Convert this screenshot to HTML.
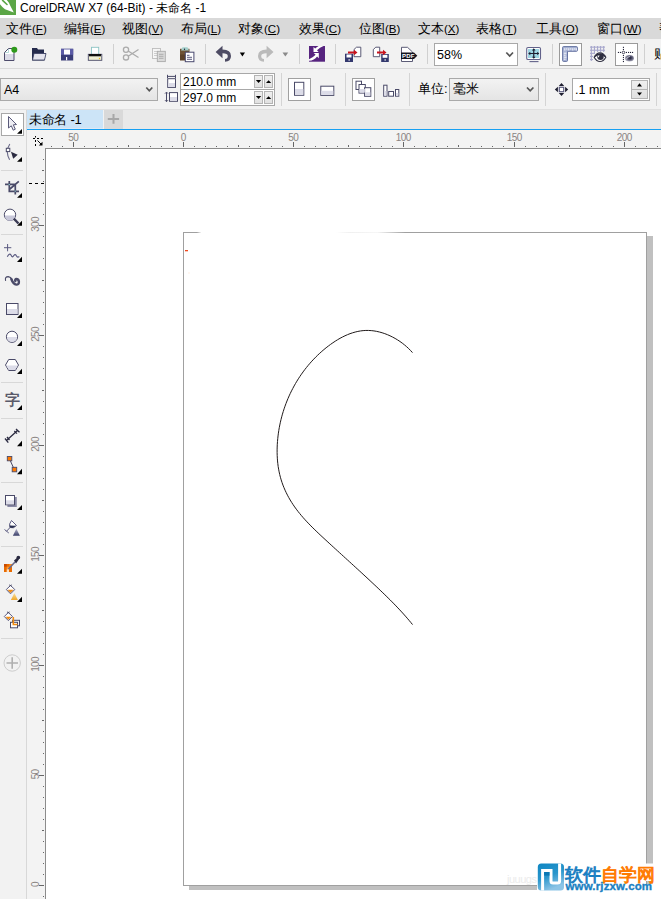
<!DOCTYPE html>
<html><head><meta charset="utf-8">
<style>
*{margin:0;padding:0;box-sizing:border-box}
html,body{width:661px;height:899px;overflow:hidden;background:#fff;font-family:"Liberation Sans",sans-serif;color:#000}
.a{position:absolute}
.t{position:absolute;white-space:nowrap}
.mi{position:absolute;top:20px;font-size:13px;line-height:18px;white-space:nowrap}
.mi span{font-size:11.5px}
.sv{position:absolute;left:0;top:0}
</style></head><body>
<!-- backgrounds -->
<div class="a" style="left:0;top:0;width:661px;height:18px;background:#fff"></div>
<div class="a" style="left:0;top:18px;width:661px;height:21px;background:#d9d9d9"></div>
<div class="a" style="left:0;top:39px;width:661px;height:70px;background:#f2f2f2"></div>
<div class="a" style="left:0;top:68px;width:661px;height:1px;background:#dadada"></div>
<div class="a" style="left:0;top:109px;width:661px;height:1px;background:#e0e0e0"></div>
<div class="a" style="left:0;top:110px;width:661px;height:789px;background:#f2f2f2"></div>
<div class="a" style="left:27px;top:110px;width:634px;height:19px;background:#e9e9e9"></div>
<div class="a" style="left:27px;top:110px;width:76px;height:18px;background:#cce4f7"></div><div class="a" style="left:27px;top:128px;width:76px;height:1px;background:#dfe9f5"></div>
<div class="a" style="left:104px;top:110px;width:19px;height:19px;background:#d9d9d9"></div><div class="a" style="left:103px;top:110px;width:1px;height:19px;background:#f2f2f2"></div>
<div class="a" style="left:27px;top:129px;width:634px;height:1px;background:#17a0f2"></div>
<div class="a" style="left:27px;top:130px;width:634px;height:1px;background:#f7f3ef"></div>
<div class="a" style="left:26px;top:110px;width:1px;height:789px;background:#d8d8d8"></div>
<!-- rulerbg -->
<div class="a" style="left:27px;top:131px;width:634px;height:17px;background:#f3f3f3"></div>
<div class="a" style="left:27px;top:148px;width:18px;height:751px;background:#f3f3f3"></div>
<div class="a" style="left:45px;top:148px;width:616px;height:1px;background:#8c8c8c"></div>
<div class="a" style="left:45px;top:148px;width:1px;height:751px;background:#8c8c8c"></div>
<div class="a" style="left:46px;top:149px;width:615px;height:750px;background:#fff"></div>

<!-- title -->
<svg class="a" style="left:0;top:0" width="16" height="15" viewBox="0 0 16 15"><rect width="16" height="15" fill="#5ba646"/><path d="M0 0 L6.8 0 Q9.3 2.8 10.3 5.8 L13.8 12.6 L5 9.2 Q2.3 7.3 0 4.2 Z" fill="#fff"/><path d="M2.6 0.3 L7 4.5" stroke="#5ba646" stroke-width="1.6" stroke-linecap="round"/></svg>

<div class="t" style="left:20px;top:1px;font-size:12px;line-height:15px">CorelDRAW X7 (64-Bit) - 未命名 -1</div>

<!-- menu -->
<div class="mi" style="left:6px">文件<span>(<u>F</u>)</span></div>
<div class="mi" style="left:64px">编辑<span>(<u>E</u>)</span></div>
<div class="mi" style="left:122px">视图<span>(<u>V</u>)</span></div>
<div class="mi" style="left:181px">布局<span>(<u>L</u>)</span></div>
<div class="mi" style="left:238px">对象<span>(<u>C</u>)</span></div>
<div class="mi" style="left:299px">效果<span>(<u>C</u>)</span></div>
<div class="mi" style="left:359px">位图<span>(<u>B</u>)</span></div>
<div class="mi" style="left:418px">文本<span>(<u>X</u>)</span></div>
<div class="mi" style="left:476px">表格<span>(<u>T</u>)</span></div>
<div class="mi" style="left:536px">工具<span>(<u>O</u>)</span></div>
<div class="mi" style="left:597px">窗口<span>(<u>W</u>)</span></div>
<div class="mi" style="left:659px">帮</div>


<!-- toolbar1 icons -->
<svg class="sv" width="661" height="110" viewBox="0 0 661 110" style="shape-rendering:geometricPrecision">
<g fill="#d0d0d0">
<rect x="113" y="44" width="1" height="20"/><rect x="205" y="44" width="1" height="20"/>
<rect x="299" y="44" width="1" height="20"/><rect x="335" y="44" width="1" height="20"/>
<rect x="427" y="44" width="1" height="20"/><rect x="552" y="44" width="1" height="20"/>
<rect x="644" y="44" width="1" height="20"/>
</g>
<!-- new -->
<path d="M4.5 52.5 L8.5 48.5 L14 48.5 L14 60.5 L4.5 60.5 Z" fill="#fff"/>
<rect x="4.5" y="54" width="9.5" height="6.5" fill="#dcdce8"/>
<path d="M4.5 52.5 L8.5 48.5 L14 48.5 L14 60.5 L4.5 60.5 Z" fill="none" stroke="#4d4b6b" stroke-width="1"/>
<path d="M5 52.5 L8.5 52.5 L8.5 49" fill="none" stroke="#9cc" stroke-width="0.7"/>
<circle cx="14.3" cy="49.8" r="3" fill="#2f9a1c"/>
<!-- open -->
<path d="M32 48 L37 48 L38 49.5 L44 49.5 L44 53 L46 53 L44.5 60.5 L32 60.5 Z" fill="#252b4d"/>
<path d="M34 53.5 L46 53.5 L44.5 60 L32.5 60 Z" fill="#e4e4ee" stroke="#3a3f62" stroke-width="0.8"/>
<!-- save -->
<rect x="61" y="48.8" width="12.2" height="11.7" fill="#3a3d78"/>
<rect x="61" y="48.8" width="12.2" height="6" fill="#5b5ba6"/>
<rect x="64" y="49.5" width="6" height="5" fill="#fff"/>
<rect x="66" y="57" width="1.2" height="3.3" fill="#fff"/>
<!-- print -->
<rect x="91.5" y="47.3" width="7.2" height="7.5" fill="#fff" stroke="#8cc4c4" stroke-width="0.9"/>
<rect x="88.3" y="54.3" width="13.5" height="6" fill="#efefd4" stroke="#4a4a68" stroke-width="0.9"/>
<rect x="89" y="54" width="12" height="2.3" fill="#111"/>
<circle cx="99.5" cy="58.5" r="0.7" fill="#e8c020"/>
<!-- scissors -->
<g fill="none" stroke="#ababab" stroke-width="1.3">
<circle cx="126" cy="49.8" r="2.6"/><circle cx="126" cy="57.4" r="2.6"/>
<path d="M128.2 51 L138.5 57.5 M128.2 56.2 L138.5 49.5"/>
</g>
<!-- copy -->
<rect x="152.5" y="48.5" width="8" height="10" fill="#f6f6f6" stroke="#bdbdbd" stroke-width="0.9"/>
<g stroke="#c4c4c4" stroke-width="0.8"><path d="M154 51.5h5M154 53.5h5M154 55.5h5"/></g>
<rect x="157.3" y="51.3" width="8" height="10.3" fill="#dadada" stroke="#ababab" stroke-width="0.9"/>
<g stroke="#a0a0a0" stroke-width="0.8"><path d="M159 54.3h4.5M159 56.3h4.5M159 58.3h4.5"/></g>
<!-- paste -->
<rect x="180" y="48.8" width="9.5" height="11.5" fill="#6e5334"/>
<rect x="180" y="54.5" width="9.5" height="5.8" fill="#5a4128"/>
<path d="M181 50.5 L182.5 47.3 L187.5 47.3 L189 50.5 Z" fill="#a5d0cc"/>
<circle cx="184.5" cy="49.3" r="0.7" fill="#223"/>
<rect x="185.3" y="52.2" width="8.6" height="9.5" fill="#fff" stroke="#4a4a70" stroke-width="1"/>
<g stroke="#4a4a70" stroke-width="0.9"><path d="M187 55.3h2.5M187 57.3h5M187 59.3h5"/></g>
<!-- undo -->
<path d="M215.6 52 L222.5 45.8 L222.5 49.5 Q231 49.5 231 56 Q231 61.7 225 61.7 L225 59 Q227.8 59 227.8 56 Q227.8 53.3 222.5 53.3 L222.5 58.3 Z" fill="#4e4c64"/>
<path d="M239.8 52.6 L245 52.6 L242.4 56.4 Z" fill="#000"/>
<!-- redo -->
<path d="M273.5 52 L266.6 45.8 L266.6 49.5 Q258 49.5 258 56 Q258 61.7 264 61.7 L264 59 Q261.2 59 261.2 56 Q261.2 53.3 266.6 53.3 L266.6 58.3 Z" fill="#bababa"/>
<path d="M282.5 52.6 L288.2 52.6 L285.35 56.4 Z" fill="#8a8a8a"/>
<!-- purple -->
<rect x="309" y="46" width="16" height="15.7" fill="#56237f"/>
<path d="M313.5 47 L313.5 52 L318.7 52 L317 50.2 Q319.8 47.3 323.5 46 L318.6 46 Q316.5 47.3 315.2 48.6 Z" fill="#fff"/>
<path d="M318.8 58.2 L318.8 53 L313.8 53 L315.6 54.8 Q313 57.6 309 59.2 L309 60.8 Q314.3 60.4 317.1 56.5 Z" fill="#fff"/>
<!-- import -->
<path d="M354 49.5 L356.5 47.2 L360.8 47.2 L360.8 56.7 L354 56.7 Z" fill="#fff" stroke="#4a4a68" stroke-width="0.9"/>
<rect x="345" y="53.7" width="8" height="8.3" fill="#33386e"/>
<rect x="346.5" y="54.5" width="5" height="3" fill="#fff"/>
<rect x="348.5" y="59.3" width="1.3" height="1.3" fill="#fff"/>
<path d="M348 51.5 L354 51.5 L354 49.8 L357.5 52.5 L354 55.2 L354 53.5 L348 53.5 Z" fill="#c8141e"/>
<!-- export -->
<path d="M373.3 49.5 L375.8 47.2 L379.7 47.2 L379.7 56.7 L373.3 56.7 Z" fill="#fff" stroke="#4a4a68" stroke-width="0.9"/>
<rect x="381.2" y="54" width="7.6" height="8" fill="#33386e"/>
<rect x="382.6" y="54.8" width="4.8" height="3" fill="#fff"/>
<rect x="384.5" y="59.3" width="1.3" height="1.3" fill="#fff"/>
<path d="M377 51.5 L383 51.5 L383 49.8 L386.5 52.5 L383 55.2 L383 53.5 L377 53.5 Z" fill="#c8141e"/>
<!-- pdf -->
<path d="M401.5 47.3 L407.5 47.3 L412.5 52 L412.5 61.5 L401.5 61.5 Z" fill="#fff" stroke="#4a4a68" stroke-width="0.9"/>
<path d="M401 52.5 L414 52.5 L417.3 55.8 L414 59 L401 59 Z" fill="#141420"/>
<text x="402" y="58.3" font-family="Liberation Sans" font-weight="bold" font-size="6" fill="#fff" letter-spacing="0.2">PDF</text>
<!-- zoom combo -->
<rect x="434.5" y="43.5" width="83" height="22" fill="#fff" stroke="#a8a8a8" stroke-width="1"/>
<path d="M506.3 52.5 L509.7 56 L513 52.5" fill="none" stroke="#555" stroke-width="1.7"/>
<!-- zoom icon -->
<rect x="526.7" y="47.5" width="13.8" height="12" rx="1.3" fill="#fff" stroke="#62628a" stroke-width="1.1"/>
<rect x="528" y="49" width="11.2" height="9" fill="#9fd6e4"/>
<path d="M529.5 61.6h9" stroke="#62628a" stroke-width="1.1"/>
<path d="M529 53.5h9.5M533.75 49v9" stroke="#1e1e30" stroke-width="1.2"/>
<path d="M528.2 53.5 L530.3 51.7 L530.3 55.3 Z M539.3 53.5 L537.2 51.7 L537.2 55.3 Z M533.75 48.3 L531.9 50.4 L535.6 50.4 Z M533.75 58.8 L531.9 56.7 L535.6 56.7 Z" fill="#1e1e30"/>
<!-- rulers toggle -->
<rect x="559.5" y="43.5" width="22" height="22" fill="#fff" stroke="#9a9a9a" stroke-width="1"/>
<path d="M563.5 46.6 L576.5 46.6 Q577.4 46.6 577.4 47.6 L577.4 50.4 Q577.4 51.3 576.5 51.3 L567.5 51.3 L567.5 60.6 Q567.5 61.4 566.6 61.4 L563.5 61.4 Q562.6 61.4 562.6 60.6 L562.6 47.6 Q562.6 46.6 563.5 46.6 Z" fill="#a9b4d6" stroke="#6674a2" stroke-width="1"/>
<g stroke="#fff" stroke-width="0.9">
<path d="M564.8 48.2v2.3M566.8 48.2v1.5M568.8 48.2v2.3M570.8 48.2v1.5M572.8 48.2v2.3M574.8 48.2v1.5M576.3 48.2v2.3"/>
<path d="M563.8 53.2h2.6M563.8 55.2h1.8M563.8 57.2h2.6M563.8 59.2h1.8"/>
</g>
<!-- grid eye -->
<g fill="#a9a9cd">
<rect x="590.8" y="46" width="1.1" height="15"/><rect x="593.9" y="46" width="1.1" height="8"/>
<rect x="597" y="46" width="1.1" height="6"/><rect x="600" y="46" width="1.1" height="6"/><rect x="603.1" y="46" width="1.1" height="6"/>
<rect x="590" y="46.6" width="15" height="1.1"/><rect x="590" y="49.7" width="15" height="1.1"/>
<rect x="590" y="52.8" width="5" height="1.1"/><rect x="590" y="55.9" width="3" height="1.1"/><rect x="590" y="59" width="3" height="1.1"/>
</g>
<path d="M594.2 57.3 Q596.5 52.8 600 52.8 Q603.5 52.8 605.8 57.3 Q603.5 61.5 600 61.5 Q596.5 61.5 594.2 57.3 Z" fill="#fff" stroke="#2e2e40" stroke-width="1.2"/>
<circle cx="600.5" cy="56.8" r="3.2" fill="#2e2e40"/>
<path d="M594.8 56.5 Q600 52 605.2 56.5" fill="none" stroke="#2e2e40" stroke-width="1.6"/>
<path d="M597.8 55.5 L599.6 55.5 L598.3 57.8 Z" fill="#fff"/>
<!-- guidelines -->
<rect x="615.5" y="43.5" width="22" height="22" fill="#fff" stroke="#9a9a9a" stroke-width="1"/>
<g fill="#222238">
<rect x="622.9" y="46.8" width="1.1" height="1.1"/><rect x="622.9" y="48.9" width="1.1" height="1.1"/>
<rect x="622.9" y="55" width="1.1" height="1.1"/><rect x="622.9" y="57" width="1.1" height="1.1"/><rect x="622.9" y="59" width="1.1" height="1.1"/><rect x="622.9" y="61" width="1.1" height="1.1"/>
<rect x="617.9" y="51.9" width="1.1" height="1.1"/><rect x="619.9" y="51.9" width="1.1" height="1.1"/>
<rect x="625.9" y="51.9" width="1.1" height="1.1"/><rect x="628" y="51.9" width="1.1" height="1.1"/><rect x="630" y="51.9" width="1.1" height="1.1"/><rect x="632" y="51.9" width="1.1" height="1.1"/>
</g>
<circle cx="623.45" cy="52.45" r="1.3" fill="#fff" stroke="#222238" stroke-width="0.8"/>
<defs><radialGradient id="eg" cx="0.55" cy="0.45" r="0.6"><stop offset="0" stop-color="#1a1a30"/><stop offset="0.45" stop-color="#555570"/><stop offset="1" stop-color="#c8c8d4"/></radialGradient></defs>
<ellipse cx="629.4" cy="58.3" rx="4.5" ry="3.3" fill="url(#eg)"/>
<path d="M626.5 59 Q627.5 56.5 630 56.5" fill="none" stroke="#e8e8f0" stroke-width="0.7"/>
</svg>
<div class="t" style="left:437px;top:48px;font-size:12.5px;line-height:15px">58%</div>
<div class="t" style="left:654px;top:46px;font-size:13px;line-height:15px">贴</div>

<!-- property bar -->
<svg class="sv" width="661" height="110" viewBox="0 0 661 110" style="shape-rendering:geometricPrecision">
<defs>
<linearGradient id="dd" x1="0" y1="0" x2="0" y2="1"><stop offset="0" stop-color="#f3f3f3"/><stop offset="1" stop-color="#e4e4e4"/></linearGradient>
<linearGradient id="sp" x1="0" y1="0" x2="0" y2="1"><stop offset="0" stop-color="#f0f0f0"/><stop offset="1" stop-color="#e0e0e0"/></linearGradient>
</defs>
<g fill="#d4d4d4">
<rect x="281" y="73" width="1" height="33"/><rect x="345" y="73" width="1" height="33"/>
<rect x="409" y="73" width="1" height="33"/><rect x="545" y="73" width="1" height="33"/>
<rect x="656" y="73" width="1" height="33"/>
</g>
<!-- A4 dropdown -->
<rect x="0.5" y="78.5" width="157" height="22" fill="url(#dd)" stroke="#a9a9a9" stroke-width="1"/>
<path d="M146.3 87.5 L149.3 90.8 L152.3 87.5" fill="none" stroke="#555" stroke-width="1.7"/>
<!-- W/H icons -->
<g stroke="#4a4a68" stroke-width="1" fill="none">
<path d="M167 76.4h9M167.5 74.8v3.2M175.5 74.8v3.2"/>
<rect x="167.7" y="78.7" width="7.8" height="8.7" fill="#fff"/>
<path d="M166.5 92.3v9.2M165 93.6l1.5-1.5l1.5 1.5M165 100.2l1.5 1.5l1.5-1.5"/>
<rect x="169.5" y="92.6" width="8" height="8.7" fill="#fff"/>
</g>
<rect x="168.2" y="83" width="6.8" height="3.9" fill="#dcdce8"/>
<rect x="170" y="97" width="7" height="3.8" fill="#dcdce8"/>
<!-- size box -->
<rect x="180.5" y="73.5" width="94" height="32" fill="#fff" stroke="#a8a8a8" stroke-width="1"/>
<path d="M180.5 89.5h94" stroke="#a8a8a8" stroke-width="1"/>
<g fill="url(#sp)" stroke="#b4b4b4" stroke-width="1">
<rect x="254.5" y="75.5" width="8" height="12"/><rect x="264.5" y="75.5" width="8" height="12"/>
<rect x="254.5" y="91.5" width="8" height="12"/><rect x="264.5" y="91.5" width="8" height="12"/>
</g>
<g fill="#000">
<path d="M255.9 80 L261.2 80 L258.55 83 Z"/><path d="M266 83 L271.2 83 L268.6 80.2 Z"/>
<path d="M255.9 96 L261.2 96 L258.55 99 Z"/><path d="M266 99 L271.2 99 L268.6 96.2 Z"/>
</g>
<!-- portrait/landscape -->
<rect x="288.5" y="78.5" width="22" height="22" fill="#fff" stroke="#a0a0a0" stroke-width="1"/>
<rect x="294.5" y="82.3" width="9.3" height="13" fill="#fff" stroke="#4a4a68" stroke-width="1"/>
<rect x="295" y="89" width="8.3" height="5.8" fill="#dcdce8"/>
<rect x="320.8" y="86.2" width="13" height="9.2" fill="#fff" stroke="#4a4a68" stroke-width="1"/>
<rect x="321.3" y="90.8" width="12" height="4.1" fill="#dcdce8"/>
<!-- pages -->
<rect x="352.5" y="78.5" width="22" height="22" fill="#fff" stroke="#a0a0a0" stroke-width="1"/>
<g stroke="#4a4a68" stroke-width="1" fill="#fff">
<rect x="356" y="81.2" width="5.5" height="8.3"/>
<rect x="359" y="84.5" width="6.3" height="8.6"/>
<rect x="364.6" y="87.7" width="6.2" height="8.6"/>
</g>
<rect x="359.5" y="89" width="5.3" height="3.6" fill="#dcdce8"/><rect x="365.1" y="92.3" width="5.2" height="3.5" fill="#dcdce8"/>
<g stroke="#4a4a68" stroke-width="1" fill="#fff">
<rect x="383.7" y="85.2" width="3.3" height="11"/>
<rect x="388.7" y="91.5" width="4.8" height="4.7"/>
<rect x="395.5" y="89.5" width="3.3" height="6.7"/>
</g>
<rect x="384.2" y="91" width="2.3" height="4.7" fill="#dcdce8"/><rect x="396" y="93" width="2.3" height="2.7" fill="#dcdce8"/>
<!-- unit dropdown -->
<rect x="449.5" y="78.5" width="89" height="22" fill="url(#dd)" stroke="#a9a9a9" stroke-width="1"/>
<path d="M527 87.5 L530.2 90.8 L533.4 87.5" fill="none" stroke="#555" stroke-width="1.7"/>
<!-- nudge -->
<g fill="#1e1e30">
<path d="M561.5 83 L558.8 86 L564.2 86 Z M561.5 96 L558.8 93 L564.2 93 Z M554.8 89.5 L557.9 86.8 L557.9 92.2 Z M568.2 89.5 L565.1 86.8 L565.1 92.2 Z"/>
</g>
<rect x="559.3" y="87.3" width="4.4" height="4.4" fill="#fff" stroke="#55557a" stroke-width="1.1"/>
<rect x="572.5" y="78.5" width="77" height="22" fill="#fff" stroke="#a8a8a8" stroke-width="1"/>
<rect x="631.5" y="80.5" width="16" height="18" fill="url(#sp)" stroke="#b4b4b4" stroke-width="1"/>
<path d="M631.5 89.5h16" stroke="#b4b4b4" stroke-width="1"/>
<path d="M637 86.5 L642 86.5 L639.5 83.3 Z M637 92.5 L642 92.5 L639.5 95.6 Z" fill="#000"/>
</svg>
<div class="t" style="left:4px;top:83px;font-size:12.5px;line-height:15px">A4</div>
<div class="t" style="left:183px;top:75px;font-size:12px;line-height:15px">210.0 mm</div>
<div class="t" style="left:183px;top:91px;font-size:12px;line-height:15px">297.0 mm</div>
<div class="t" style="left:418px;top:81px;font-size:13px;line-height:15px">单位:</div>
<div class="t" style="left:453px;top:81px;font-size:13px;line-height:15px">毫米</div>
<div class="t" style="left:575px;top:83px;font-size:12.5px;line-height:15px">.1 mm</div>

<div class="t" style="left:29px;top:112px;font-size:13px;line-height:16px;letter-spacing:-0.3px">未命名 -1</div>
<svg class="sv" width="661" height="899" viewBox="0 0 661 899">
<path d="M107.8 119h11.3M113.5 114v9.8" stroke="#a8a8a8" stroke-width="2"/>
</svg>

<!-- toolbox -->
<svg class="sv" width="661" height="899" viewBox="0 0 661 899" style="shape-rendering:geometricPrecision">
<g fill="#d8d8d8"><rect x="1" y="170" width="22" height="1"/><rect x="1" y="234" width="22" height="1"/><rect x="1" y="382" width="22" height="1"/><rect x="1" y="418" width="22" height="1"/><rect x="1" y="482" width="22" height="1"/><rect x="1" y="546" width="22" height="1"/><rect x="1" y="638" width="22" height="1"/></g>
<rect x="1.5" y="113.5" width="22" height="22" fill="#fff" stroke="#a8a8a8" stroke-width="1"/>
<path d="M8.5 116.5 L16.5 124.5 L13.3 124.8 L15.3 129.2 L13.2 130.2 L11.3 125.8 L8.5 128 Z" fill="#eeeef4" stroke="#5a5a7a" stroke-width="1" stroke-linejoin="round"/>
<path d="M22 129 L22 133.7 L17 133.7 Z" fill="#000"/>
<!-- shape -->
<path d="M9.8 144 Q5 151.5 9.6 159.8" fill="none" stroke="#6a6a88" stroke-width="1.1"/>
<rect x="6.3" y="148.3" width="3.5" height="3.3" fill="#fff" stroke="#4a4a68" stroke-width="1"/>
<path d="M11 151.7 L17.7 154.8 L13.2 158.7 Z" fill="#2a2a40"/>
<path d="M22 157 L22 161.7 L17 161.7 Z" fill="#000"/>
<!-- crop -->
<g stroke="#4a4a68" stroke-width="1.7" fill="none">
<path d="M5 184.3h10.3v10.3M9.3 181v10.3h9.7M9.3 189.5 L18.8 181.3"/>
</g>
<rect x="8.6" y="184" width="1.3" height="1.1" fill="#8ccccc"/><rect x="14.6" y="190.6" width="1.3" height="1.1" fill="#8ccccc"/>
<path d="M22 193 L22 197.7 L17 197.7 Z" fill="#000"/>
<!-- zoom -->
<circle cx="10" cy="214.8" r="5.7" fill="#fff" stroke="#4a4a68" stroke-width="1"/>
<path d="M4.8 215.5 A5.2 5.2 0 0 0 15.2 215.5 Z" fill="#c8c8da"/>
<path d="M13.8 218.7 L18.5 223.5" stroke="#3a3a54" stroke-width="2.4"/>
<path d="M22 220.7 L22 225.8 L17 225.8 Z" fill="#000"/>
<!-- freehand -->
<path d="M4 247.7h7.3M7.6 244v7.3" stroke="#5a5a80" stroke-width="1"/>
<path d="M7.3 256.8 Q9.5 252.5 11 255 Q12.3 258.5 13.8 255.5 Q15.3 253.5 16.5 256 Q17.5 258 19.3 256.5" fill="none" stroke="#5a5a80" stroke-width="1.1"/>
<path d="M22 256.7 L22 262 L17 262 Z" fill="#000"/>
<!-- artistic -->
<path d="M5.6 280.8 Q4.6 276.6 8.3 276.6 Q10.6 276.9 12.2 279.8" fill="none" stroke="#4a4a68" stroke-width="1.1"/>
<path d="M11.3 279 Q13.2 284.2 16.3 284.6 Q18.9 284.7 18.9 281.9 Q18.8 279 16.2 279 Q14.8 279.3 15.3 281" fill="none" stroke="#4a4a68" stroke-width="2.4" stroke-linecap="round"/>
<!-- rect -->
<rect x="6.5" y="303.5" width="11.5" height="11" fill="#fff" stroke="#4a4a68" stroke-width="1"/>
<rect x="7" y="309" width="10.5" height="5" fill="#dcdce8"/>
<path d="M22 312.7 L22 318 L17 318 Z" fill="#000"/>
<!-- ellipse -->
<circle cx="12" cy="336.8" r="5.6" fill="#fff" stroke="#4a4a68" stroke-width="1"/>
<path d="M6.9 337 A5.1 5.1 0 0 0 17.1 337 Z" fill="#dcdce8"/>
<path d="M22 340.7 L22 346 L17 346 Z" fill="#000"/>
<!-- polygon -->
<path d="M5.5 365 L8.7 359.5 L15.3 359.5 L18.5 365 L15.3 370.5 L8.7 370.5 Z" fill="#fff" stroke="#4a4a68" stroke-width="1"/>
<path d="M6.1 365.6 L17.9 365.6 L15 370 L9 370 Z" fill="#dcdce8"/>
<path d="M22 368.7 L22 374 L17 374 Z" fill="#000"/>
<!-- text -->
<text x="4.5" y="405" font-size="14.5" font-weight="bold" fill="#5a5a6a" font-family="Liberation Sans">字</text>
<path d="M22 405 L22 410 L17 410 Z" fill="#000"/>
<!-- dimension -->
<g stroke="#2a2a40" stroke-width="1.3" fill="none"><path d="M6.5 440.5 L17.5 430.5M5 438.5 L8.3 442.7M7 437 L9.5 440M16 429 L19.5 432.3M14.3 431 L17 433.6"/></g>
<path d="M22 440.7 L22 446.2 L17 446.2 Z" fill="#000"/>
<!-- connector -->
<path d="M9.5 459 L14.3 469.5" stroke="#4a4a68" stroke-width="1"/>
<rect x="7.3" y="456.5" width="4.5" height="4.3" fill="#ff7a00" stroke="#4a4a68" stroke-width="0.9"/>
<rect x="12.2" y="467.3" width="4.5" height="4.5" fill="#ff7a00" stroke="#4a4a68" stroke-width="0.9"/>
<path d="M22 468.8 L22 474.2 L17 474.2 Z" fill="#000"/>
<!-- drop shadow -->
<rect x="7.4" y="497" width="9.4" height="10" fill="#8a8aa6"/>
<rect x="5.5" y="495.5" width="9" height="9.3" fill="#fff" stroke="#4a4a68" stroke-width="1"/>
<rect x="6" y="500.3" width="8" height="4" fill="#dcdce8"/>
<path d="M22 505 L22 510 L17 510 Z" fill="#000"/>
<!-- transparency -->
<path d="M4.5 529.5 L8.8 533 M6.5 531.3 L10.5 527" stroke="#5a5a80" stroke-width="1" fill="none"/>
<path d="M11.5 520.5 L16.5 525.5 Q13.5 529 10 527.5 Q8.5 524 11.5 520.5 Z" fill="#fff" stroke="#5a5a80" stroke-width="1"/>
<path d="M9.2 525.5 L16 525.8 Q13.5 528.8 10.3 527.5 Z" fill="#2a3050"/>
<defs><linearGradient id="tg" x1="0" y1="0" x2="0" y2="1"><stop offset="0" stop-color="#b4b4cc"/><stop offset="1" stop-color="#3a3e68"/></linearGradient>
<linearGradient id="og" x1="0" y1="0" x2="0" y2="1"><stop offset="0" stop-color="#f8e0a0"/><stop offset="1" stop-color="#f0a828"/></linearGradient></defs>
<path d="M16.4 528.7 L19.9 535.7 L12.9 535.7 Z" fill="url(#tg)"/>
<!-- eyedropper -->
<rect x="4" y="564" width="8" height="8" fill="#e86a00"/>
<rect x="4" y="564" width="2.7" height="2.7" fill="#c84a00"/><rect x="9.3" y="564" width="2.7" height="2.7" fill="#ff8a20"/>
<rect x="6.7" y="566.7" width="2.6" height="2.6" fill="#ff9a30"/><rect x="6.7" y="569.3" width="2.3" height="2.7" fill="#ffe0c0"/>
<path d="M8.5 569 L15 562" stroke="#6a6a88" stroke-width="1.6"/>
<path d="M14 560.5 L19 556 Q20.5 557 19.5 558.5 L16 563.5 Z" fill="#2a2a40"/>
<circle cx="18.3" cy="557.5" r="1.8" fill="#2a2a40"/>
<path d="M22 568.8 L22 573.8 L17 573.8 Z" fill="#000"/>
<!-- interactive fill -->
<path d="M10.5 585.5 L14.8 589.5 L10.5 593.8 L6.3 589.5 Z" fill="#fff" stroke="#5a5a80" stroke-width="1"/>
<path d="M7.5 589.8 L13.6 589.8 L10.5 593 Z" fill="#f08a10"/>
<path d="M9.2 584.8 L11.8 586.3M11.8 584.8 L9.2 586.3" stroke="#4a4a68" stroke-width="0.8"/>
<path d="M14.4 593 L17.9 600 L10.9 600 Z" fill="url(#og)"/>
<path d="M22 596.8 L22 602 L17 602 Z" fill="#000"/>
<!-- smart fill -->
<path d="M8.3 612.5 L12.5 616.5 L8.3 620.6 L4.3 616.5 Z" fill="#fff" stroke="#5a5a80" stroke-width="1"/>
<path d="M5.5 616.8 L11.3 616.8 L8.3 619.8 Z" fill="#f08a10"/>
<path d="M7 611.8 L9.6 613.3M9.6 611.8 L7 613.3" stroke="#4a4a68" stroke-width="0.8"/>
<rect x="12.5" y="620.3" width="7" height="5.5" fill="none" stroke="#4a4a68" stroke-width="1"/>
<rect x="10.5" y="622.3" width="7" height="5.5" fill="#fff" stroke="#4a4a68" stroke-width="1"/>
<path d="M13.3 617 L13.3 624.5 L17.5 624.5" fill="none" stroke="#f08a10" stroke-width="1.6"/>
<!-- plus -->
<circle cx="12.2" cy="663" r="8.2" fill="none" stroke="#c8c8c8" stroke-width="0.9"/>
<path d="M6.5 663h11.5M12.2 657.3v11.5" stroke="#b0b0b0" stroke-width="1.6"/>
</svg>
<!-- rulers -->
<svg class="sv" width="661" height="899" viewBox="0 0 661 899">
<g fill="#666"><rect x="51" y="146" width="1" height="1"/><rect x="62" y="146" width="1" height="1"/><rect x="73" y="142" width="1" height="5"/><rect x="84" y="146" width="1" height="1"/><rect x="95" y="146" width="1" height="1"/><rect x="106" y="146" width="1" height="1"/><rect x="117" y="146" width="1" height="1"/><rect x="128" y="145" width="1" height="2"/><rect x="139" y="146" width="1" height="1"/><rect x="150" y="146" width="1" height="1"/><rect x="161" y="146" width="1" height="1"/><rect x="172" y="146" width="1" height="1"/><rect x="183" y="142" width="1" height="5"/><rect x="194" y="146" width="1" height="1"/><rect x="205" y="146" width="1" height="1"/><rect x="216" y="146" width="1" height="1"/><rect x="227" y="146" width="1" height="1"/><rect x="238" y="145" width="1" height="2"/><rect x="249" y="146" width="1" height="1"/><rect x="260" y="146" width="1" height="1"/><rect x="271" y="146" width="1" height="1"/><rect x="282" y="146" width="1" height="1"/><rect x="293" y="142" width="1" height="5"/><rect x="304" y="146" width="1" height="1"/><rect x="315" y="146" width="1" height="1"/><rect x="326" y="146" width="1" height="1"/><rect x="337" y="146" width="1" height="1"/><rect x="348" y="145" width="1" height="2"/><rect x="359" y="146" width="1" height="1"/><rect x="370" y="146" width="1" height="1"/><rect x="381" y="146" width="1" height="1"/><rect x="392" y="146" width="1" height="1"/><rect x="403" y="142" width="1" height="5"/><rect x="414" y="146" width="1" height="1"/><rect x="425" y="146" width="1" height="1"/><rect x="436" y="146" width="1" height="1"/><rect x="447" y="146" width="1" height="1"/><rect x="458" y="145" width="1" height="2"/><rect x="470" y="146" width="1" height="1"/><rect x="481" y="146" width="1" height="1"/><rect x="492" y="146" width="1" height="1"/><rect x="503" y="146" width="1" height="1"/><rect x="514" y="142" width="1" height="5"/><rect x="525" y="146" width="1" height="1"/><rect x="536" y="146" width="1" height="1"/><rect x="547" y="146" width="1" height="1"/><rect x="558" y="146" width="1" height="1"/><rect x="569" y="145" width="1" height="2"/><rect x="580" y="146" width="1" height="1"/><rect x="591" y="146" width="1" height="1"/><rect x="602" y="146" width="1" height="1"/><rect x="613" y="146" width="1" height="1"/><rect x="624" y="142" width="1" height="5"/><rect x="635" y="146" width="1" height="1"/><rect x="646" y="146" width="1" height="1"/><rect x="657" y="146" width="1" height="1"/></g>
<g fill="#8a8482" font-family="Liberation Sans" font-size="10" text-anchor="middle" letter-spacing="-0.45"><text x="73.3" y="141">50</text><text x="183.3" y="141">0</text><text x="293.3" y="141">50</text><text x="403.3" y="141">100</text><text x="514.3" y="141">150</text><text x="624.3" y="141">200</text></g>
<g fill="#666"><rect x="43" y="896" width="1" height="1"/><rect x="39" y="885" width="5" height="1"/><rect x="43" y="874" width="1" height="1"/><rect x="43" y="863" width="1" height="1"/><rect x="43" y="852" width="1" height="1"/><rect x="43" y="841" width="1" height="1"/><rect x="42" y="830" width="2" height="1"/><rect x="43" y="819" width="1" height="1"/><rect x="43" y="808" width="1" height="1"/><rect x="43" y="797" width="1" height="1"/><rect x="43" y="786" width="1" height="1"/><rect x="39" y="775" width="5" height="1"/><rect x="43" y="764" width="1" height="1"/><rect x="43" y="753" width="1" height="1"/><rect x="43" y="742" width="1" height="1"/><rect x="43" y="731" width="1" height="1"/><rect x="42" y="720" width="2" height="1"/><rect x="43" y="709" width="1" height="1"/><rect x="43" y="698" width="1" height="1"/><rect x="43" y="687" width="1" height="1"/><rect x="43" y="676" width="1" height="1"/><rect x="39" y="665" width="5" height="1"/><rect x="43" y="654" width="1" height="1"/><rect x="43" y="643" width="1" height="1"/><rect x="43" y="632" width="1" height="1"/><rect x="43" y="621" width="1" height="1"/><rect x="42" y="610" width="2" height="1"/><rect x="43" y="599" width="1" height="1"/><rect x="43" y="588" width="1" height="1"/><rect x="43" y="577" width="1" height="1"/><rect x="43" y="566" width="1" height="1"/><rect x="39" y="555" width="5" height="1"/><rect x="43" y="544" width="1" height="1"/><rect x="43" y="533" width="1" height="1"/><rect x="43" y="522" width="1" height="1"/><rect x="43" y="511" width="1" height="1"/><rect x="42" y="500" width="2" height="1"/><rect x="43" y="489" width="1" height="1"/><rect x="43" y="478" width="1" height="1"/><rect x="43" y="467" width="1" height="1"/><rect x="43" y="456" width="1" height="1"/><rect x="39" y="445" width="5" height="1"/><rect x="43" y="434" width="1" height="1"/><rect x="43" y="423" width="1" height="1"/><rect x="43" y="412" width="1" height="1"/><rect x="43" y="401" width="1" height="1"/><rect x="42" y="390" width="2" height="1"/><rect x="43" y="379" width="1" height="1"/><rect x="43" y="368" width="1" height="1"/><rect x="43" y="357" width="1" height="1"/><rect x="43" y="346" width="1" height="1"/><rect x="39" y="335" width="5" height="1"/><rect x="43" y="324" width="1" height="1"/><rect x="43" y="313" width="1" height="1"/><rect x="43" y="302" width="1" height="1"/><rect x="43" y="291" width="1" height="1"/><rect x="42" y="280" width="2" height="1"/><rect x="43" y="269" width="1" height="1"/><rect x="43" y="258" width="1" height="1"/><rect x="43" y="247" width="1" height="1"/><rect x="43" y="236" width="1" height="1"/><rect x="39" y="225" width="5" height="1"/><rect x="43" y="214" width="1" height="1"/><rect x="43" y="203" width="1" height="1"/><rect x="43" y="192" width="1" height="1"/><rect x="43" y="181" width="1" height="1"/><rect x="42" y="170" width="2" height="1"/><rect x="43" y="159" width="1" height="1"/></g>
<g fill="#8a8482" font-family="Liberation Sans" font-size="10" text-anchor="middle" letter-spacing="-0.6"><text transform="translate(39,884.4) rotate(-90)">0</text><text transform="translate(39,774.4) rotate(-90)">50</text><text transform="translate(39,664.4) rotate(-90)">100</text><text transform="translate(39,554.4) rotate(-90)">150</text><text transform="translate(39,444.4) rotate(-90)">200</text><text transform="translate(39,334.4) rotate(-90)">250</text><text transform="translate(39,224.4) rotate(-90)">300</text></g>
<g fill="#000">
<rect x="33" y="138" width="2" height="1"/><rect x="37" y="138" width="2" height="1"/><rect x="41" y="138" width="2" height="1"/>
<rect x="35" y="136" width="1" height="1.5"/><rect x="35" y="140" width="1" height="2"/><rect x="35" y="144" width="1" height="2"/>
</g>
<path d="M37.5 140.5 L41.5 144.5" stroke="#000" stroke-width="1"/>
<path d="M42.5 145.5 L42.5 141.8 L38.8 145.5 Z" fill="#000"/>
<g fill="#000"><rect x="29" y="183" width="3" height="1"/><rect x="35" y="183" width="3" height="1"/><rect x="41" y="183" width="3" height="1"/></g>
</svg>

<!-- page -->
<svg class="sv" width="661" height="899" viewBox="0 0 661 899">
<defs>
<linearGradient id="tb" x1="183" y1="0" x2="646" y2="0" gradientUnits="userSpaceOnUse">
<stop offset="0" stop-color="#a0a0a0"/><stop offset="0.03" stop-color="#a0a0a0"/><stop offset="0.04" stop-color="#fff"/>
<stop offset="0.33" stop-color="#fff"/><stop offset="0.36" stop-color="#f0f0f0"/><stop offset="0.42" stop-color="#f6f6f6"/><stop offset="0.48" stop-color="#a0a0a0"/><stop offset="1" stop-color="#a0a0a0"/>
</linearGradient>
</defs>
<rect x="647" y="236" width="6" height="654" fill="#c0c0c0"/>
<rect x="189" y="886" width="464" height="4" fill="#c0c0c0"/>
<rect x="183" y="232" width="1" height="654" fill="#a0a0a0"/>
<rect x="646" y="232" width="1" height="654" fill="#a0a0a0"/>
<rect x="183" y="885" width="464" height="1" fill="#a0a0a0"/>
<rect x="183" y="232" width="464" height="1" fill="url(#tb)"/>
<rect x="185" y="250" width="3" height="1.3" fill="#f04a20"/>
<rect x="188.5" y="272.5" width="1" height="1" fill="#fde0c8"/>
</svg>

<!-- curve -->
<svg class="sv" width="661" height="899" viewBox="0 0 661 899">
<path d="M412.46 352.61 L410.63 350.59 L408.69 348.62 L406.65 346.73 L404.51 344.90 L402.28 343.15 L399.97 341.49 L397.58 339.92 L395.13 338.45 L392.61 337.08 L390.05 335.82 L387.44 334.67 L384.79 333.65 L382.11 332.76 L379.41 332.00 L376.70 331.38 L373.97 330.91 L371.25 330.60 L368.53 330.44 L365.83 330.45 L363.14 330.62 L360.47 330.95 L357.82 331.43 L355.20 332.05 L352.60 332.80 L350.03 333.68 L347.48 334.68 L344.97 335.79 L342.49 337.00 L340.03 338.31 L337.62 339.71 L335.24 341.19 L332.90 342.75 L330.60 344.37 L328.34 346.05 L326.12 347.78 L323.95 349.56 L321.82 351.39 L319.74 353.26 L317.70 355.17 L315.71 357.13 L313.76 359.13 L311.86 361.17 L310.01 363.24 L308.20 365.36 L306.44 367.51 L304.73 369.70 L303.07 371.93 L301.45 374.19 L299.89 376.48 L298.37 378.81 L296.90 381.16 L295.48 383.55 L294.12 385.96 L292.80 388.41 L291.53 390.88 L290.31 393.37 L289.15 395.89 L288.03 398.43 L286.97 401.00 L285.96 403.59 L285.01 406.20 L284.10 408.82 L283.25 411.47 L282.45 414.13 L281.71 416.81 L281.02 419.51 L280.38 422.21 L279.80 424.94 L279.28 427.67 L278.81 430.41 L278.40 433.17 L278.04 435.93 L277.74 438.70 L277.49 441.48 L277.31 444.26 L277.18 447.05 L277.12 449.84 L277.12 452.62 L277.19 455.40 L277.33 458.18 L277.53 460.94 L277.82 463.70 L278.17 466.44 L278.61 469.17 L279.13 471.88 L279.72 474.58 L280.41 477.25 L281.18 479.89 L282.03 482.51 L282.96 485.11 L283.98 487.67 L285.07 490.21 L286.24 492.71 L287.48 495.18 L288.79 497.61 L290.16 500.00 L291.61 502.36 L293.11 504.67 L294.68 506.94 L296.30 509.17 L297.97 511.37 L299.70 513.53 L301.47 515.66 L303.28 517.76 L305.13 519.83 L307.02 521.87 L308.94 523.89 L310.89 525.88 L312.87 527.86 L314.86 529.82 L316.88 531.76 L318.90 533.69 L320.94 535.61 L322.99 537.51 L325.04 539.41 L327.10 541.30 L329.15 543.19 L331.20 545.08 L333.26 546.96 L335.31 548.83 L337.36 550.71 L339.41 552.58 L341.46 554.45 L343.51 556.32 L345.56 558.19 L347.61 560.05 L349.65 561.92 L351.70 563.79 L353.74 565.65 L355.78 567.52 L357.82 569.39 L359.86 571.26 L361.90 573.14 L363.94 575.02 L365.97 576.90 L368.00 578.78 L370.03 580.67 L372.06 582.57 L374.08 584.47 L376.11 586.37 L378.13 588.28 L380.14 590.20 L382.15 592.13 L384.15 594.06 L386.15 596.00 L388.14 597.96 L390.11 599.92 L392.08 601.90 L394.03 603.88 L395.96 605.88 L397.88 607.90 L399.79 609.92 L401.67 611.96 L403.54 614.02 L405.38 616.10 L407.21 618.19 L409.01 620.29 L410.78 622.42 L412.53 624.57" fill="none" stroke="#201a1a" stroke-width="1" stroke-linejoin="round"/>
</svg>

<!-- watermark -->
<svg class="sv" width="661" height="899" viewBox="0 0 661 899">
<defs>
<linearGradient id="lg" x1="0" y1="0" x2="0.4" y2="1"><stop offset="0" stop-color="#0e86c2"/><stop offset="0.55" stop-color="#2a96cc"/><stop offset="1" stop-color="#8cc4e6"/></linearGradient>
</defs>
<text x="507" y="883" font-family="Liberation Sans" font-size="11" fill="#ececec" letter-spacing="-0.5">juuugs</text>
<rect x="537" y="884" width="117" height="8" fill="#fff"/>
<rect x="565" y="863.5" width="88" height="17.5" fill="#fff"/>
<rect x="537.8" y="863.5" width="26.2" height="27" rx="3.5" fill="url(#lg)"/>
<path d="M542.6 890.5 V870.4 H551 V881 Q551 883 553 883 H557.5 Q559.6 883 559.6 881 V863.5" fill="none" stroke="#fff" stroke-width="3"/>
<rect x="544.1" y="872" width="5.4" height="3.6" fill="#0b78b4"/>
<g font-family="Liberation Sans" font-size="17.5" stroke-width="0.9">
<text x="565" y="880.5" fill="#1a7fc2" stroke="#1a7fc2">软件</text>
<text x="601" y="880.5" fill="#ff7b00" stroke="#ff7b00">自学网</text>
</g>
<text x="565.5" y="889.7" font-family="Liberation Sans" font-weight="bold" font-size="11.5" fill="#1a7fc2" stroke="#1a7fc2" stroke-width="0.35" letter-spacing="0.15">www.rjzxw.com</text>
</svg>
</body></html>
